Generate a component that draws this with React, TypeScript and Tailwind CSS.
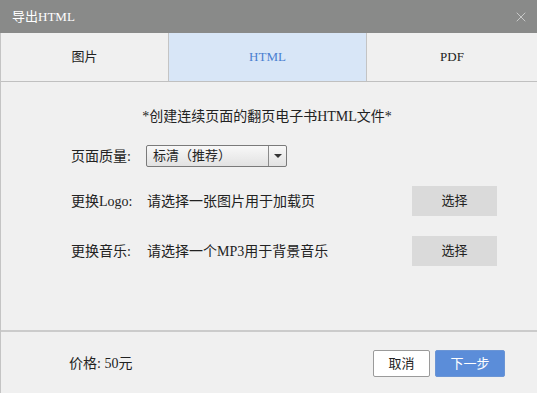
import { X } from "lucide-react";

const font = { fontFamily: '"Liberation Serif", "Noto Sans CJK SC", serif' };

export default function App() {
    return (
        <div className="w-[537px] h-[393px] flex flex-col bg-[#f0f0f0] text-[13px] text-[#222]" style={font}>
            {/* 标题栏 */}
            <div className="h-[33px] bg-[#898a89] flex items-center justify-between pl-[12px] pr-[8px] text-white text-[13px]">
                <span>导出HTML</span>
                <X size={16} strokeWidth={1} className="text-[#e8e8e8]" />
            </div>

            <div className="flex-1 flex flex-col border-l border-[#c4c4c4]">
                {/* 选项卡 */}
                <div className="h-[49px] flex border-b border-[#c0c0c0] text-[13px]">
                    <div className="w-[168px] flex items-center justify-center border-r border-[#c4c4c4]">图片</div>
                    <div className="w-[198px] flex items-center justify-center border-r border-[#c4c4c4] bg-[#d8e6f7] text-[#4a7fd0]">HTML</div>
                    <div className="flex-1 flex items-center justify-center">PDF</div>
                </div>

                <div className="h-[248px] flex flex-col text-[14px]">
                    <div className="text-center pt-[24px] h-[63px] pr-[4px]">*创建连续页面的翻页电子书HTML文件*</div>

                    <div className="flex items-center h-[22px] pl-[70px]">
                        <span className="w-[75px]">页面质量:</span>
                        <div className="w-[141px] h-[22px] flex border border-[#7a7a7a] rounded-[2px] bg-gradient-to-b from-[#f8f8f8] to-[#e2e2e2] text-[13px]">
                            <span className="flex-1 pl-[6px] leading-[20px]">标清（推荐）</span>
                            <span className="w-[18px] border-l border-[#8a8a8a] flex items-center justify-center">
                                <span className="w-0 h-0 border-l-[4px] border-r-[4px] border-t-[4px] border-l-transparent border-r-transparent border-t-[#333]" />
                            </span>
                        </div>
                    </div>

                    <div className="flex items-center h-[30px] mt-[19px] pl-[70px] pr-[40px]">
                        <span className="w-[76px]">更换Logo:</span>
                        <span className="flex-1">请选择一张图片用于加载页</span>
                        <button className="w-[85px] h-[30px] bg-[#dadada] text-[13px]">选择</button>
                    </div>

                    <div className="flex items-center h-[30px] mt-[20px] pl-[70px] pr-[40px]">
                        <span className="w-[76px]">更换音乐:</span>
                        <span className="flex-1">请选择一个MP3用于背景音乐</span>
                        <button className="w-[85px] h-[30px] bg-[#dadada] text-[13px]">选择</button>
                    </div>
                </div>

                {/* 底部 */}
                <div className="border-t-2 border-[#cbcbcb] flex-1 flex items-center pl-[68px] pr-[32px] pt-[2px]">
                    <span className="flex-1 text-[14px]">价格: 50元</span>
                    <button className="w-[57px] h-[27px] bg-white border border-[#9a9a9a] rounded-[2px] mr-[5px]">取消</button>
                    <button className="w-[70px] h-[27px] bg-[#5b8dd9] text-white rounded-[2px] border border-[#6b95d5]">下一步</button>
                </div>
            </div>
        </div>
    );
}
